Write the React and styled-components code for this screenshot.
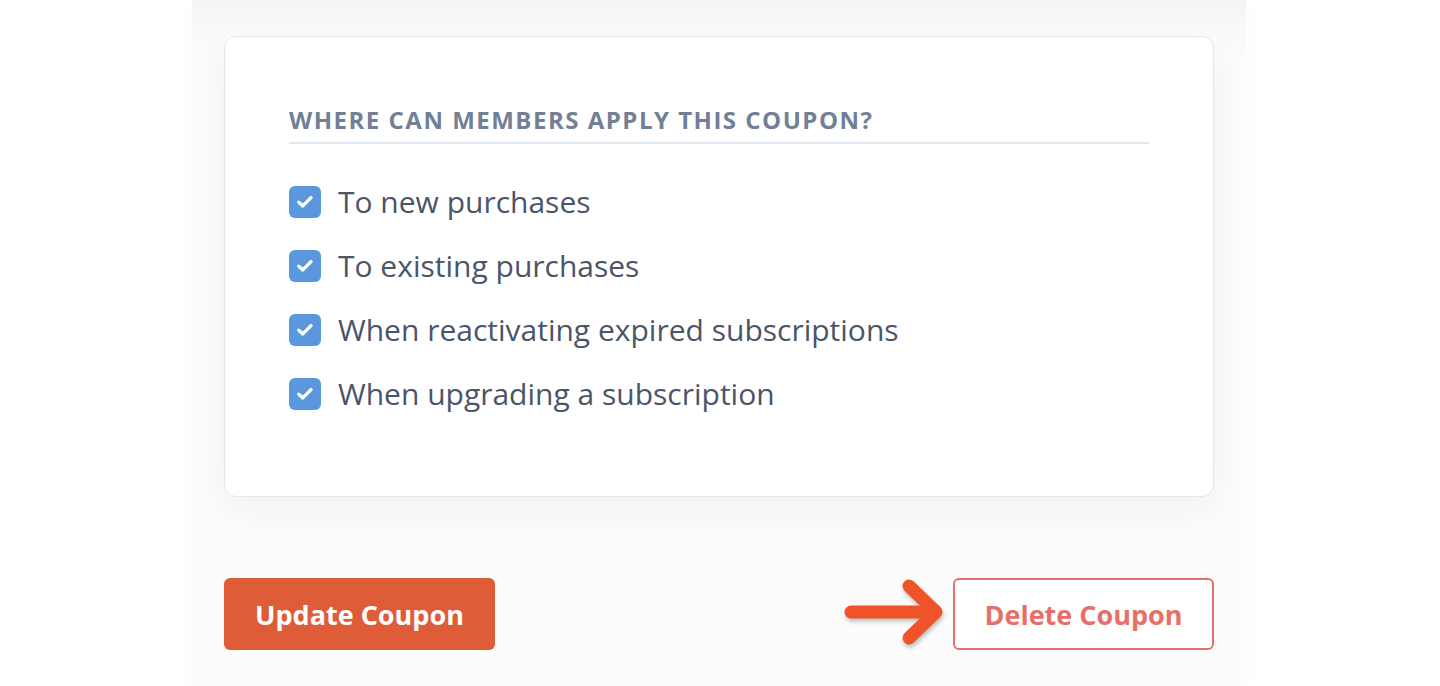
import React from "react";
import styled, { createGlobalStyle } from "styled-components";

const GlobalStyle = createGlobalStyle`
  html, body {
    margin: 0;
    padding: 0;
    background: #ffffff;
  }
  body {
    font-family: "Open Sans", Lato, sans-serif;
    -webkit-font-smoothing: antialiased;
  }
`;

const StyledPage = styled.div`
  display: flex;
  justify-content: center;
  width: 100%;
  min-height: 686px;
  margin-left: -1px;
`;

const StyledPanel = styled.div`
  width: 1054px;
  box-sizing: border-box;
  padding: 36px 32px 36px 32px;
  background: linear-gradient(#f3f3f4 0px, #f9f9fa 24px, #fcfcfc 60px, #fcfcfc 100%);
  box-shadow: 0 0 24px rgba(0, 0, 0, 0.015);
`;

const StyledCard = styled.section`
  box-sizing: border-box;
  height: 461px;
  background: #ffffff;
  border: 1px solid #e2e8f0;
  border-radius: 12px;
  box-shadow: 0 12px 36px rgba(30, 40, 60, 0.05);
  padding: 69px 64px 0 64px;
`;

const StyledHeading = styled.h3`
  margin: 0;
  padding-bottom: 8px;
  border-bottom: 2px solid #e2e8f0;
  color: #718096;
  font-size: 24px;
  line-height: 28px;
  font-weight: 700;
  letter-spacing: 1.5px;
  text-transform: uppercase;
  white-space: nowrap;
`;

const StyledList = styled.ul`
  list-style: none;
  margin: 38px 0 0 0;
  padding: 0;
  display: flex;
  flex-direction: column;
  gap: 24px;
`;

const StyledItem = styled.li`
  display: flex;
  align-items: center;
  gap: 17px;
  height: 40px;
`;

const StyledBox = styled.span`
  flex: none;
  width: 32px;
  height: 32px;
  border-radius: 6px;
  background: ${(p) => (p.$checked ? "#5a97dc" : "#ffffff")};
  display: flex;
  align-items: center;
  justify-content: center;
`;

const StyledLabel = styled.span`
  color: #4a5568;
  font-size: 30px;
  line-height: 40px;
  white-space: nowrap;
`;

const StyledActions = styled.div`
  display: flex;
  align-items: center;
  justify-content: space-between;
  margin-top: 77px;
`;

const StyledRight = styled.div`
  display: flex;
  align-items: center;
  gap: 4px;
`;

const StyledButton = styled.button`
  box-sizing: border-box;
  height: 72px;
  width: ${(p) => p.$width}px;
  border-radius: 6px;
  font-family: "Open Sans", Lato, sans-serif;
  font-size: 27px;
  font-weight: 700;
  cursor: pointer;
  white-space: nowrap;
  background: ${(p) => (p.$outline ? "#ffffff" : "#df5c39")};
  color: ${(p) => (p.$outline ? "#e86f68" : "#ffffff")};
  border: ${(p) => (p.$outline ? "2px solid #e86f68" : "none")};
`;

const StyledArrow = styled.svg`
  display: block;
  filter: drop-shadow(1px 3px 2px rgba(0, 0, 0, 0.25));
`;

const items = [
  "To new purchases",
  "To existing purchases",
  "When reactivating expired subscriptions",
  "When upgrading a subscription",
];

function Check() {
  return (
    <svg width="20" height="20" viewBox="0 0 20 20">
      <path
        d="M3.8 10.2 L7.8 13.9 L16 5.6"
        fill="none"
        stroke="#ffffff"
        strokeWidth="3.4"
        strokeLinecap="round"
        strokeLinejoin="round"
      />
    </svg>
  );
}

function Arrow() {
  return (
    <StyledArrow width="106" height="80" viewBox="0 0 106 80">
      <g
        fill="none"
        stroke="#f05328"
        strokeWidth="13"
        strokeLinecap="round"
        strokeLinejoin="round"
      >
        <path d="M8 38 L92 38" />
        <path d="M66 12 L93 38 L66 64" />
      </g>
    </StyledArrow>
  );
}

export default function App() {
  return (
    <>
      <GlobalStyle />
      <StyledPage>
        <StyledPanel>
          <StyledCard>
            <StyledHeading>Where can members apply this coupon?</StyledHeading>
            <StyledList>
              {items.map((label) => (
                <StyledItem key={label}>
                  <StyledBox $checked>
                    <Check />
                  </StyledBox>
                  <StyledLabel>{label}</StyledLabel>
                </StyledItem>
              ))}
            </StyledList>
          </StyledCard>
          <StyledActions>
            <StyledButton type="button" $width={271}>
              Update Coupon
            </StyledButton>
            <StyledRight>
              <Arrow />
              <StyledButton type="button" $outline $width={261}>
                Delete Coupon
              </StyledButton>
            </StyledRight>
          </StyledActions>
        </StyledPanel>
      </StyledPage>
    </>
  );
}
